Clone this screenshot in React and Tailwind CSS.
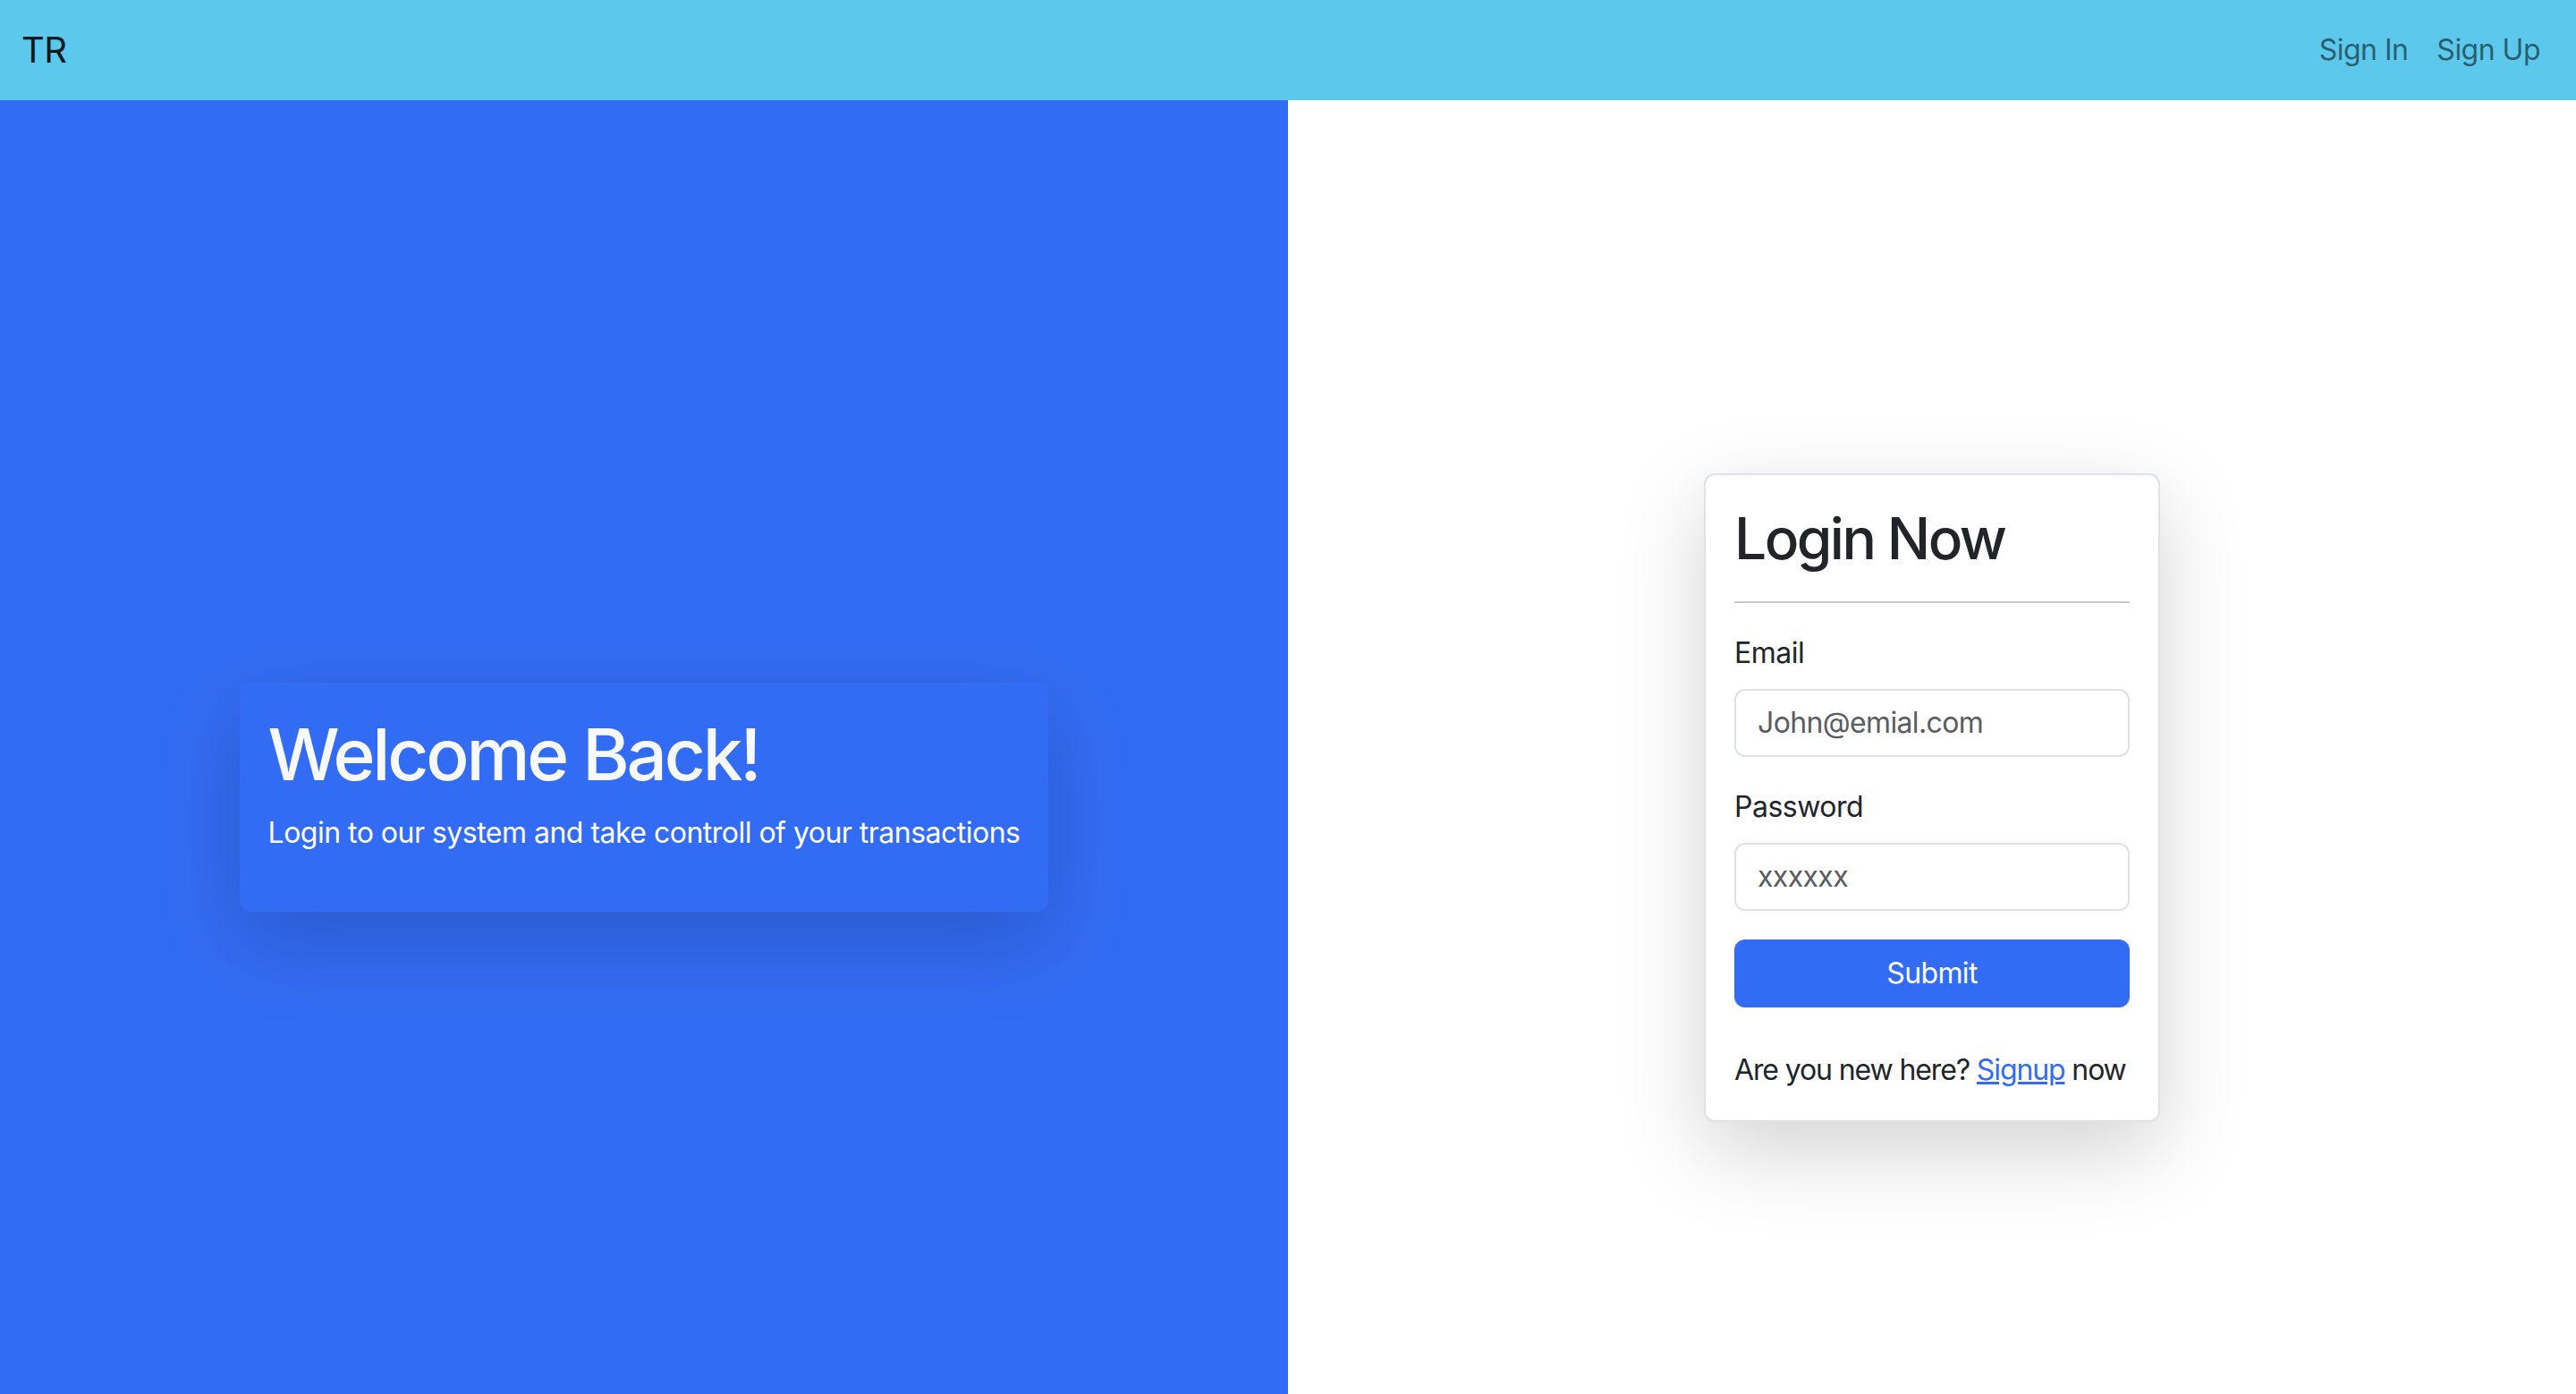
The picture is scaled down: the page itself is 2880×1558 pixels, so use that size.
import React from 'react';

const FONT = "font-['Inter','Noto_Sans',sans-serif]";

function Field({ label, placeholder, type = 'text' }) {
  return (
    <div className="mb-[32px]">
      <label className="block text-[32px] leading-[48px] mb-[16px]">{label}</label>
      <input
        type={type}
        placeholder={placeholder}
        className="block w-full h-[76px] px-[24px] text-[32px] leading-[48px] tracking-[-0.02em] border-2 border-[#dee2e6] rounded-[12px] bg-white outline-none placeholder:text-[#595c60]"
      />
    </div>
  );
}

export default function App() {
  return (
    <div className={`${FONT} text-[#212529] tracking-[-0.032em]`}>
      <nav className="h-[112px] bg-[#5bc8ec] flex items-center justify-between px-[24px]">
        <span className="text-[40px] leading-[60px] text-black/90">TR</span>
        <div className="flex">
          <a href="#" className="px-[16px] text-[32px] leading-[48px] text-black/55">Sign In</a>
          <a href="#" className="px-[16px] text-[32px] leading-[48px] text-black/55">Sign Up</a>
        </div>
      </nav>

      <div className="flex">
        <div className="w-1/2 h-[1558px] bg-[#336cf4] flex items-center justify-center">
          <div className="rounded-[12px] bg-[#336cf4] p-[32px] shadow-[0_32px_96px_rgba(0,0,0,0.175)]">
            <h1 className="text-[80px] leading-[96px] font-medium text-[#f8f9fa] mb-[16px] tracking-[-0.04em]">Welcome Back!</h1>
            <p className="text-[32px] leading-[48px] text-white mb-[32px]">
              Login to our system and take controll of your transactions
            </p>
          </div>
        </div>

        <div className="w-1/2 h-[1558px] bg-white flex items-center justify-center">
          <div className="w-[510px] border-2 border-[#dee2e6] rounded-[12px] bg-white p-[32px] shadow-[0_32px_96px_rgba(0,0,0,0.175)]">
            <h2 className="text-[64px] leading-[77px] font-medium tracking-[-0.04em]">Login Now</h2>
            <hr className="my-[32px] border-0 border-t-2 border-[#c8c9ca]" />
            <form onSubmit={(e) => e.preventDefault()}>
              <Field label="Email" placeholder="John@emial.com" type="email" />
              <Field label="Password" placeholder="xxxxxx" type="text" />
              <button
                type="submit"
                className="block w-full h-[76px] rounded-[12px] bg-[#336cf4] text-white text-[32px] leading-[48px] tracking-[-0.02em]"
              >
                Submit
              </button>
            </form>
            <p className="mt-[46px] text-[32px] leading-[48px] whitespace-nowrap tracking-[-0.035em]">
              Are you new here?{' '}
              <a href="#" className="text-[#336cf4] underline">Signup</a> now
            </p>
          </div>
        </div>
      </div>
    </div>
  );
}
